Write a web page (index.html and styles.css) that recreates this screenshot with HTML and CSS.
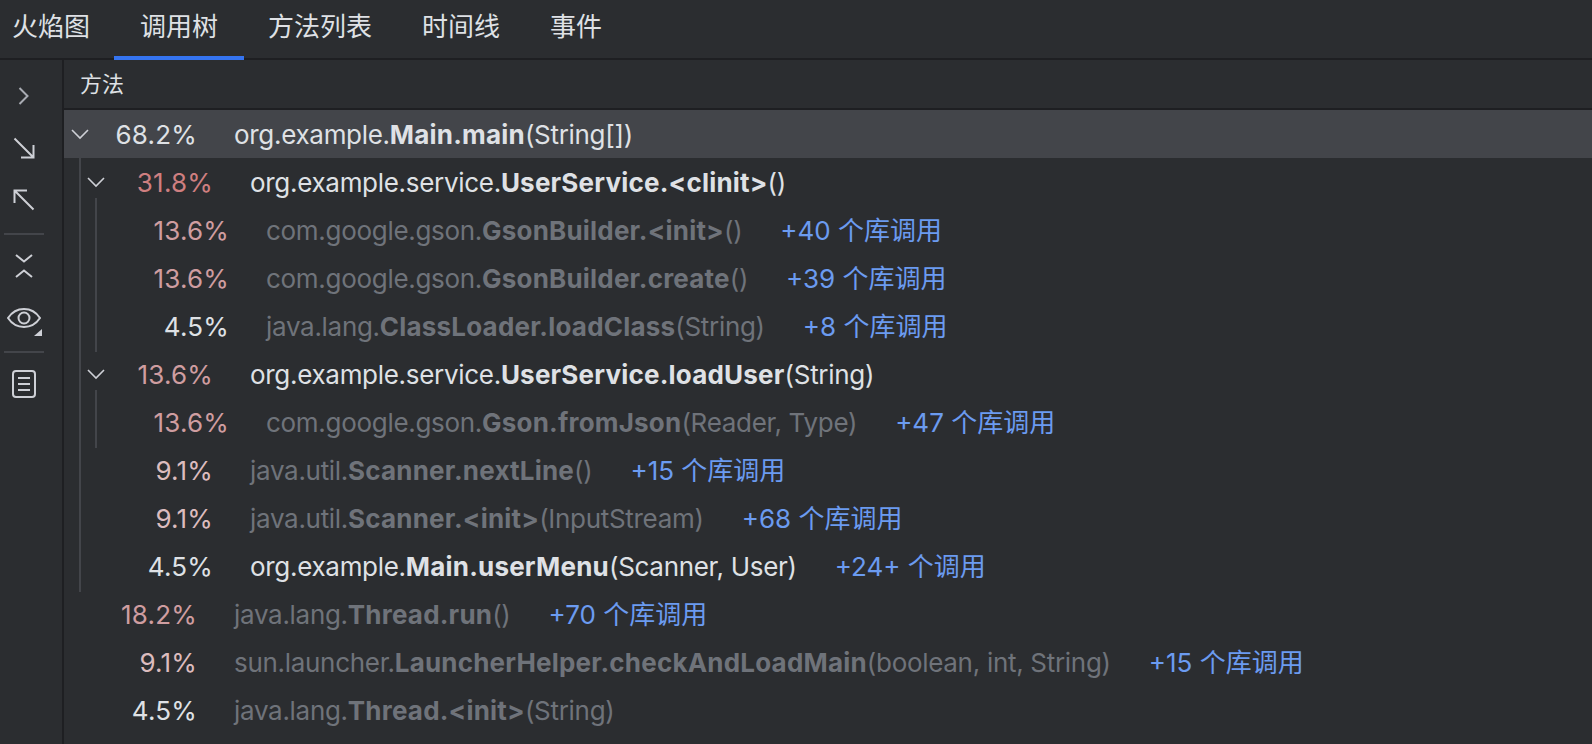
FILE: index.html
```html
<!DOCTYPE html>
<html lang="zh">
<head>
<meta charset="utf-8">
<title>调用树</title>
<link rel="stylesheet" href="styles.css">
</head>
<body>
<nav class="tabs">
  <div class="tab">火焰图</div>
  <div class="tab active">调用树</div>
  <div class="tab">方法列表</div>
  <div class="tab">时间线</div>
  <div class="tab">事件</div>
</nav>
<div class="main">
  <aside class="side">
    <div class="tool dim"><svg width="24" height="24" viewBox="0 0 24 24"><path d="M7.5 4l8 8-8 8"/></svg></div>
    <div class="tool"><svg width="24" height="24" viewBox="0 0 24 24"><path d="M2.5 2.500l19 19M21.500 9v12.500H9"/></svg></div>
    <div class="tool"><svg width="24" height="24" viewBox="0 0 24 24"><path d="M21.500 21.500l-19-19M2.500 15V2.500H15"/></svg></div>
    <div class="rule"></div>
    <div class="tool"><svg width="20" height="28" viewBox="0 0 20 28"><path d="M2 3l8 6.500L18 3M2 25l8-6.500 8 6.500"/></svg></div>
    <div class="tool eye"><svg width="36" height="32" viewBox="0 0 36 32"><path d="M2 16C10 4 26 4 34 16 26 28 10 28 2 16z"/><circle cx="18" cy="16" r="5.500"/><polygon class="fill" points="36,27 36,34 28,34"/></svg></div>
    <div class="rule"></div>
    <div class="tool"><svg width="26" height="30" viewBox="0 0 26 30"><rect x="2" y="2" width="22" height="26" rx="3"/><path d="M7 9h12M7 15h12M7 21h12"/></svg></div>
  </aside>
  <section class="tree">
    <header class="head">方法</header>
    <div class="rows">
      <i class="guide g1"></i><i class="guide g2"></i><i class="guide g3"></i>
      <div class="row l0 selected"><span class="chev"><svg width="18" height="12" viewBox="0 0 18 12"><path d="M1 2l8 8 8-8"/></svg></span><span class="pct">68.2%</span><span class="name">org.example.<b>Main.main</b>(String[])</span></div>
      <div class="row l1"><span class="chev"><svg width="18" height="12" viewBox="0 0 18 12"><path d="M1 2l8 8 8-8"/></svg></span><span class="pct h1">31.8%</span><span class="name">org.example.service.<b>UserService.&lt;clinit&gt;</b>()</span></div>
      <div class="row l2 lib"><span class="chev"></span><span class="pct h2">13.6%</span><span class="name">com.google.gson.<b>GsonBuilder.&lt;init&gt;</b>()</span><span class="more">+40 个库调用</span></div>
      <div class="row l2 lib"><span class="chev"></span><span class="pct h2">13.6%</span><span class="name">com.google.gson.<b>GsonBuilder.create</b>()</span><span class="more">+39 个库调用</span></div>
      <div class="row l2 lib"><span class="chev"></span><span class="pct">4.5%</span><span class="name">java.lang.<b>ClassLoader.loadClass</b>(String)</span><span class="more">+8 个库调用</span></div>
      <div class="row l1"><span class="chev"><svg width="18" height="12" viewBox="0 0 18 12"><path d="M1 2l8 8 8-8"/></svg></span><span class="pct h2">13.6%</span><span class="name">org.example.service.<b>UserService.loadUser</b>(String)</span></div>
      <div class="row l2 lib"><span class="chev"></span><span class="pct h2">13.6%</span><span class="name">com.google.gson.<b>Gson.fromJson</b>(Reader, Type)</span><span class="more">+47 个库调用</span></div>
      <div class="row l1 lib"><span class="chev"></span><span class="pct h3">9.1%</span><span class="name">java.util.<b>Scanner.nextLine</b>()</span><span class="more">+15 个库调用</span></div>
      <div class="row l1 lib"><span class="chev"></span><span class="pct h3">9.1%</span><span class="name">java.util.<b>Scanner.&lt;init&gt;</b>(InputStream)</span><span class="more">+68 个库调用</span></div>
      <div class="row l1"><span class="chev"></span><span class="pct">4.5%</span><span class="name">org.example.<b>Main.userMenu</b>(Scanner, User)</span><span class="more">+24+ 个调用</span></div>
      <div class="row l0 lib"><span class="chev"></span><span class="pct h2">18.2%</span><span class="name">java.lang.<b>Thread.run</b>()</span><span class="more">+70 个库调用</span></div>
      <div class="row l0 lib"><span class="chev"></span><span class="pct h3">9.1%</span><span class="name">sun.launcher.<b>LauncherHelper.checkAndLoadMain</b>(boolean, int, String)</span><span class="more">+15 个库调用</span></div>
      <div class="row l0 lib"><span class="chev"></span><span class="pct">4.5%</span><span class="name">java.lang.<b>Thread.&lt;init&gt;</b>(String)</span></div>
    </div>
  </section>
</div>
</body>
</html>
```

FILE: styles.css
```css
* { box-sizing: border-box; }
html, body { margin: 0; height: 100%; overflow: hidden; }
body {
  background: #2b2d30;
  color: #dfe1e5;
  font-family: Inter, "Noto Sans CJK SC", sans-serif;
  display: flex;
  flex-direction: column;
}
.tabs {
  display: flex;
  height: 60px;
  flex: none;
  border-bottom: 2px solid #1e1f22;
  margin-left: 0;
}
.tab {
  position: relative;
  font-family: "Noto Sans CJK SC", sans-serif;
  font-size: 26px;
  line-height: 50px;
  padding: 0 25px;
  height: 60px;
  color: #dfe1e5;
  white-space: nowrap;
}
.tab:first-child { margin-left: -13px; }
.tab.active::after {
  content: "";
  position: absolute;
  left: -1px;
  right: -1px;
  bottom: 0;
  height: 4px;
  background: #3574f0;
}
.main { flex: 1; display: flex; min-height: 0; }
.side {
  width: 64px;
  flex: none;
  border-right: 2px solid #1e1f22;
  display: flex;
  flex-direction: column;
  padding-top: 10px;
}
.tool { width: 48px; height: 52px; flex: none; display: flex; align-items: center; justify-content: center; }
.tool svg { fill: none; stroke: #ced0d6; stroke-width: 2; overflow: visible; }
.tool.dim svg { stroke: #a8abb2; }
.tool .fill { fill: #ced0d6; stroke: none; }
.rule { width: 40px; height: 2px; flex: none; background: #43454a; margin: 7px 0 5px 4px; }
.tree { flex: 1; min-width: 0; display: flex; flex-direction: column; }
.head {
  height: 50px;
  flex: none;
  border-bottom: 2px solid #1e1f22;
  font-family: "Noto Sans CJK SC", sans-serif;
  font-size: 22px;
  line-height: 44px;
  padding-left: 16px;
}
.rows { position: relative; flex: 1; }
.guide { position: absolute; width: 2px; background: #43454a; z-index: 1; }
.g1 { left: 15px; top: 40px; height: 442px; }
.g2 { left: 31px; top: 88px; height: 154px; }
.g3 { left: 31px; top: 280px; height: 58px; }
.row {
  height: 48px;
  display: flex;
  align-items: baseline;
  font-size: 26px;
  line-height: 50px;
  white-space: nowrap;
  color: #dfe1e5;
}
.row.selected { background: #43454a; }
.l1 { padding-left: 16px; }
.l2 { padding-left: 32px; }
.chev { width: 32px; flex: none; align-self: center; display: flex; justify-content: center; align-items: center; }
.chev svg { fill: none; stroke: #ced0d6; stroke-width: 1.6; }
.pct { width: 101px; flex: none; text-align: right; letter-spacing: 0.2px; }
.name { margin-left: 37px; letter-spacing: -0.3px; }
.name b { font-weight: 700; letter-spacing: 0.2px; }
.lib .name { color: #6f737a; }
.more { margin-left: 38px; color: #6b9bf0; }
.h1 { color: #cf7f80; }
.h2 { color: #cf9da0; }
.h3 { color: #dcbcbe; }
```
